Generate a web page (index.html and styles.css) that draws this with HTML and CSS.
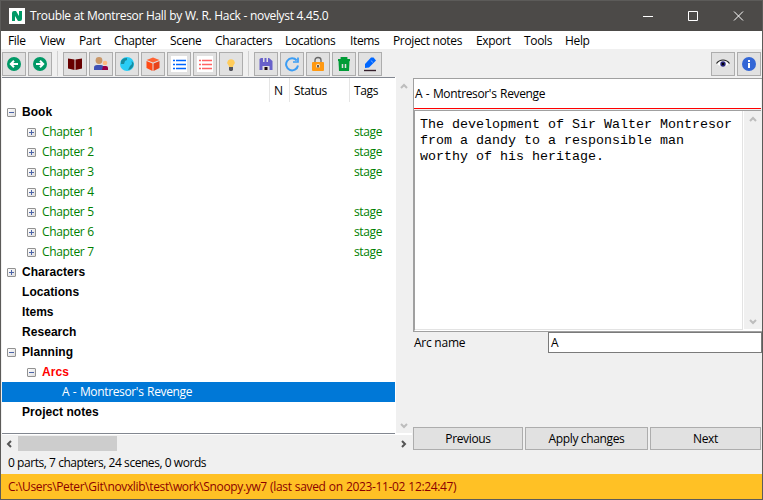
FILE: index.html
```html
<!DOCTYPE html>
<html lang="en">
<head>
<meta charset="utf-8">
<title>Trouble at Montresor Hall by W. R. Hack - novelyst 4.45.0</title>
<link rel="stylesheet" href="styles.css">
</head>
<body>
<div class="window">
  <header class="titlebar">
    <svg class="logo" viewBox="0 0 16 16"><rect width="16" height="16" fill="#fff"/><path d="M3 13V5Q3 3 5 3H7L10 8V3H13V11Q13 13 11 13H9L6 8V13Z" fill="#009966"/></svg>
    <h1>Trouble at Montresor Hall by W. R. Hack - novelyst 4.45.0</h1>
    <svg class="caption" viewBox="0 0 102 12"><path d="M0 6.5H10M45.5 1.5h9v9h-9zM91 1.500l9 9M100 1.500l-9 9" stroke="#fff" fill="none"/></svg>
  </header>
  <nav class="menu"><span class="w32">File</span><span class="w39">View</span><span class="w35">Part</span><span class="w56">Chapter</span><span class="w45">Scene</span><span class="w70">Characters</span><span class="w65">Locations</span><span class="w43">Items</span><span class="w83">Project notes</span><span class="w48">Export</span><span class="w41">Tools</span><span>Help</span></nav>
  <div class="toolbar">
    <button><svg viewBox="0 0 16 16"><circle cx="8" cy="8" r="7" fill="#009966"/><path d="M12 8H5M8 4.8L4.8 8L8 11.2" stroke="#fff" stroke-width="2" fill="none"/></svg></button>
    <button><svg viewBox="0 0 16 16"><circle cx="8" cy="8" r="7" fill="#009966"/><path d="M4 8H11M8 4.8L11.2 8L8 11.2" stroke="#fff" stroke-width="2" fill="none"/></svg></button>
    <i class="sep"></i>
    <button><svg viewBox="0 0 16 16"><path d="M1 2.5L7.5 3.5V14L1 12.5ZM15 2.5L8.5 3.5V14L15 12.5Z" fill="#680000"/></svg></button>
    <button><svg viewBox="0 0 16 16"><circle cx="6" cy="4.5" r="3.4" fill="#c99768"/><path d="M1 14V11.5Q1 9 4 9H8Q10.500 9 10.500 12V14Z" fill="#3f51b5"/><circle cx="12" cy="7" r="2.3" fill="#ffbc80"/><path d="M9 14L10 10H13Q15 10 15 12V14Z" fill="#990044"/></svg></button>
    <button><svg viewBox="0 0 16 16"><circle cx="8" cy="8" r="7" fill="#29cdf5"/><path d="M2 5Q4 1.500 8 2L8 4L6 5L5 8L2 8ZM12.500 5L14.500 7Q15 11 11 13.500L9 14L11 10L13 8Z" fill="#168c9f"/></svg></button>
    <button><svg viewBox="0 0 16 16"><path d="M8 1.500L14.500 4L8 6.500L1.500 4Z" fill="#ff6333"/><path d="M1.500 5L7.500 7.400V15L1.500 12Z" fill="#ff4b16"/><path d="M14.500 5L8.500 7.400V15L14.500 12Z" fill="#e8431b"/></svg></button>
    <button><svg viewBox="0 0 16 16"><path fill="#fff" d="M0 0h16v16H0z"/><path d="M2 4.500h2M2 8.500h2M2 12.500h2M5 4.500h10M5 8.500h10M5 12.500h10" stroke="#0066ff" stroke-width="1.400"/></svg></button>
    <button><svg viewBox="0 0 16 16"><path fill="#fff" d="M0 0h16v16H0z"/><path d="M2 4.500h2M2 8.500h2M2 12.500h2M5 4.500h10M5 8.500h10M5 12.500h10" stroke="#ff6262" stroke-width="1.400"/></svg></button>
    <button><svg viewBox="0 0 16 16"><path d="M6 11Q6 9.500 5 8.500Q3.500 6.500 5 4.500Q8 2 11 4.500Q12.500 6.500 11 8.500Q10 9.500 10 11Z" fill="#ffcc5b"/><path d="M6 11h4v3L9 15H7L6 14Z" fill="#53545d"/></svg></button>
    <i class="sep"></i>
    <button><svg viewBox="0 0 16 16"><path d="M1.500 3L3 2H11L14.500 5V14H1.500Z" fill="#6861ca"/><path d="M5 2h5v4H5zM4.500 10h7v4h-7z" fill="#e1e1e1"/><path d="M6.500 2h2v5h-2z" fill="#6861ca"/><path d="M6.500 11h3v3h-3z" fill="#19070c"/></svg></button>
    <button><svg viewBox="0 0 16 16"><path d="M12.700 4.500A6 6 0 1 0 14 9.500" fill="none" stroke="#3b9df4" stroke-width="2"/><path d="M9 6H14V1.500" fill="none" stroke="#3b9df4" stroke-width="1.700"/></svg></button>
    <button><svg viewBox="0 0 16 16"><path d="M5 8V4Q5 1.500 8 1.500Q11 1.500 11 4V8" fill="none" stroke="#666" stroke-width="1.300"/><rect x="2" y="6" width="12" height="9" rx="1" fill="#ff9911"/><circle cx="8" cy="10" r="2" fill="#f7e6cc"/><path d="M7.300 9h1.400v2.500H7.300z" fill="#222"/></svg></button>
    <button><svg viewBox="0 0 16 16"><path d="M2 4H14M5.500 4V2H10.500V4" stroke="#009c36" stroke-width="1.800" fill="none"/><path d="M2.500 5H13.500L13 15H3Z" fill="#009c36"/><path d="M6.500 8v4M9.500 8v4" stroke="#e1e1e1" stroke-width="1.500"/></svg></button>
    <button><svg viewBox="0 0 16 16"><path d="M3 12V8L9 1.500H11.500L14 4.500L7 11.500Z" fill="#0067ff"/><path d="M8.800 4.500L11 6.500" stroke="#79adff"/><path d="M2 14.500H14" stroke="#34202c" stroke-width="1.400"/></svg></button>
    <button class="push"><svg viewBox="0 0 16 16"><path d="M2 8Q8 2 14 8Q8 13 2 8Z" fill="#fff"/><path d="M1.500 7.500Q4 4 8 4Q12 4 14.500 7.500" fill="none" stroke="#222" stroke-width="1.200"/><circle cx="8" cy="8" r="2.700" fill="#29267e"/><circle cx="8" cy="8" r="1.200" fill="#000"/></svg></button>
    <button><svg viewBox="0 0 16 16"><circle cx="8" cy="8" r="7" fill="#3366d6"/><path d="M8 4v2M8 7v5" stroke="#fff" stroke-width="2"/></svg></button>
  </div>
  <main class="main">
    <section class="treepane">
      <div class="tree">
        <div class="heads"><span></span><span>N</span><span>Status</span><span>Tags</span></div>
        <div class="row"><i class="box"></i><b>Book</b></div>
        <div class="row chapter"><i class="box plus"></i><span>Chapter 1</span><em>stage</em></div>
        <div class="row chapter"><i class="box plus"></i><span>Chapter 2</span><em>stage</em></div>
        <div class="row chapter"><i class="box plus"></i><span>Chapter 3</span><em>stage</em></div>
        <div class="row chapter"><i class="box plus"></i><span>Chapter 4</span></div>
        <div class="row chapter"><i class="box plus"></i><span>Chapter 5</span><em>stage</em></div>
        <div class="row chapter"><i class="box plus"></i><span>Chapter 6</span><em>stage</em></div>
        <div class="row chapter"><i class="box plus"></i><span>Chapter 7</span><em>stage</em></div>
        <div class="row"><i class="box plus"></i><b>Characters</b></div>
        <div class="row leaf"><b>Locations</b></div>
        <div class="row leaf"><b>Items</b></div>
        <div class="row leaf"><b>Research</b></div>
        <div class="row"><i class="box"></i><b>Planning</b></div>
        <div class="row arcs"><i class="box"></i><b>Arcs</b></div>
        <div class="row selected"><span>A - Montresor's Revenge</span></div>
        <div class="row leaf"><b>Project notes</b></div>
      </div>
      <div class="vscroll"><svg viewBox="0 0 8 6"><path d="M1 5L4 2L7 5"/></svg><svg viewBox="0 0 8 6"><path d="M1 1L4 4L7 1"/></svg></div>
      <div class="hscroll"><svg viewBox="0 0 6 8"><path d="M5 1L2 4L5 7"/></svg><i class="thumb"></i><svg class="next" viewBox="0 0 6 8"><path d="M1 1L4 4L1 7"/></svg></div>
    </section>
    <section class="details">
      <div class="card">
        <div class="arc-title"><span>A - Montresor's Revenge</span></div>
        <div class="desc">
          <p>The development of Sir Walter Montresor<br>from a dandy to a responsible man<br>worthy of his heritage.</p>
          <div class="vscroll inner"><svg viewBox="0 0 8 6"><path d="M1 5L4 2L7 5"/></svg><svg viewBox="0 0 8 6"><path d="M1 1L4 4L7 1"/></svg></div>
        </div>
      </div>
      <div class="field"><label>Arc name</label><div class="input">A</div></div>
      <div class="actions"><button>Previous</button><button>Apply changes</button><button>Next</button></div>
    </section>
  </main>
  <div class="status"><span>0 parts, 7 chapters, 24 scenes, 0 words</span></div>
  <footer class="path"><span>C:\Users\Peter\Git\novxlib\test\work\Snoopy.yw7 (last saved on 2023-11-02 12:24:47)</span></footer>
</div>
</body>
</html>
```

FILE: styles.css
```css
* { box-sizing: border-box; }
body { margin: 0; font: 12px/20px "Open Sans", "Noto Sans", sans-serif; letter-spacing: -0.35px; color: #000; }
button { font: inherit; letter-spacing: inherit; color: inherit; padding: 0; margin: 0; background: #e1e1e1; border: 1px solid #adadad; }
svg { display: block; flex: none; }
.window { width: 763px; height: 500px; display: flex; flex-direction: column; overflow: hidden; background: #f0f0f0; border: 1px solid #5c5b59; white-space: nowrap; }
.titlebar { height: 30px; flex: none; background: #4c4a48; color: #fff; display: flex; align-items: center; padding-left: 8px; }
.logo { width: 16px; height: 16px; margin-right: 5px; }
h1 { font-size: 12px; font-weight: 400; margin: 0; word-spacing: 0.25px; }
.caption { width: 102px; height: 12px; margin: 0 17px 0 auto; }
.menu { height: 18px; flex: none; display: flex; background: #fff; padding-left: 7px; }
.menu span { flex: none; line-height: 20px; }
.w32 { width: 32px; } .w39 { width: 39px; } .w35 { width: 35px; } .w56 { width: 56px; }
.w45 { width: 45px; } .w70 { width: 70px; } .w65 { width: 65px; } .w43 { width: 43px; }
.w83 { width: 83px; } .w48 { width: 48px; } .w41 { width: 41px; }
.toolbar { height: 28px; flex: none; display: flex; gap: 2px; padding: 3px 1px 0 1px; }
.toolbar button { width: 24px; height: 24px; flex: none; display: grid; place-items: center; }
.toolbar svg { width: 16px; height: 16px; }
.toolbar .sep { width: 1px; height: 25px; margin: -1px 3px 0; background: #d0d0d0; }
.toolbar .push { margin-left: auto; }
.main { height: 375px; flex: none; display: flex; }
.treepane { width: 411px; padding-left: 1px; display: grid; grid-template-columns: 393px 17px; grid-template-rows: 357px 18px; }
.tree { background: #fff; border-top: 1px solid #828790; border-bottom: 1px solid #828790; }
.heads { display: flex; height: 24px; }
.heads span { border-right: 1px solid #e5e5e5; padding-left: 4px; line-height: 25px; }
.heads span:nth-child(1) { width: 268px; }
.heads span:nth-child(2) { width: 20px; }
.heads span:nth-child(3) { width: 60px; }
.heads span:nth-child(4) { border: 0; }
.row { height: 20px; display: flex; align-items: center; padding-left: 5px; }
.row b { font-family: "Liberation Sans", Arial, sans-serif; letter-spacing: 0.05px; }
.box { width: 9px; height: 9px; margin-right: 6px; margin-top: 1px; flex: none; border: 1px solid #919191; border-radius: 1px; background: linear-gradient(#4b63a7, #4b63a7) center / 5px 1px no-repeat, linear-gradient(135deg, #fff, #ddd); }
.plus { background: linear-gradient(#4b63a7, #4b63a7) center / 5px 1px no-repeat, linear-gradient(#4b63a7, #4b63a7) center / 1px 5px no-repeat, linear-gradient(135deg, #fff, #ddd); }
.chapter { color: #008000; padding-left: 25px; }
.chapter span { width: 312px; }
.chapter em { font-style: normal; }
.leaf { padding-left: 20px; }
.arcs { color: #f00; padding-left: 25px; }
.selected { padding-left: 60px; background: #0078d7; color: #fff; word-spacing: 0.8px; }
.vscroll { display: flex; flex-direction: column; justify-content: space-between; align-items: center; padding: 6px 0 4px; border-left: 1px solid #fff; border-bottom: 1px solid #fff; }
.vscroll svg { width: 8px; height: 6px; }
.vscroll path { fill: none; stroke: #bdbdbd; stroke-width: 2; }
.hscroll { grid-column: 1 / 3; border-top: 1px solid #fff; display: flex; align-items: center; padding-left: 4px; }
.hscroll svg { width: 6px; height: 8px; }
.hscroll path { fill: none; stroke: #555; stroke-width: 2; }
.hscroll .thumb { width: 99px; height: 15px; margin: -1px 0 0 6px; background: #cdcdcd; }
.hscroll .next { margin: 0 5px 0 auto; }
.details { width: 350px; display: flex; flex-direction: column; padding-top: 1px; }
.card { height: 254px; flex: none; border: solid #a0a0a0; border-width: 1px 0 1px 1px; margin-left: 1px; }
.arc-title { height: 30px; margin-right: 1px; background: #fff; border-bottom: 1px solid #f00; display: flex; align-items: center; padding-left: 1px; word-spacing: 0.8px; }
.desc { height: 221px; margin: 1px 1px 0 0; display: flex; border: 1px solid #a0a0a0; border-right: 0; border-bottom-color: #fff; }
.desc p { width: 328px; flex: none; margin: 0; padding: 6px 0 0 5px; background: #fff; border: solid #e3e3e3; border-width: 0 1px 1px 0; font: 13.333px/16px "Liberation Mono", "Courier New", monospace; letter-spacing: 0; }
.inner { flex: 1; padding: 5px 0 4px; }
.field { display: flex; height: 21px; flex: none; margin-left: 2px; }
.field label { width: 134px; line-height: 22px; letter-spacing: -0.25px; }
.input { flex: 1; background: #fff; border: 1px solid #7a7a7a; padding-left: 2px; }
.actions { display: grid; grid-template-columns: 110px 123px 111px; gap: 2px; height: 23px; margin: 74px 0 0 1px; }
.status { height: 22px; flex: none; padding-left: 7px; line-height: 22px; letter-spacing: -0.45px; }
.path { height: 25px; flex: none; background: #ffc125; color: #8b0000; padding-left: 7px; line-height: 26px; word-spacing: 0.5px; }
```
